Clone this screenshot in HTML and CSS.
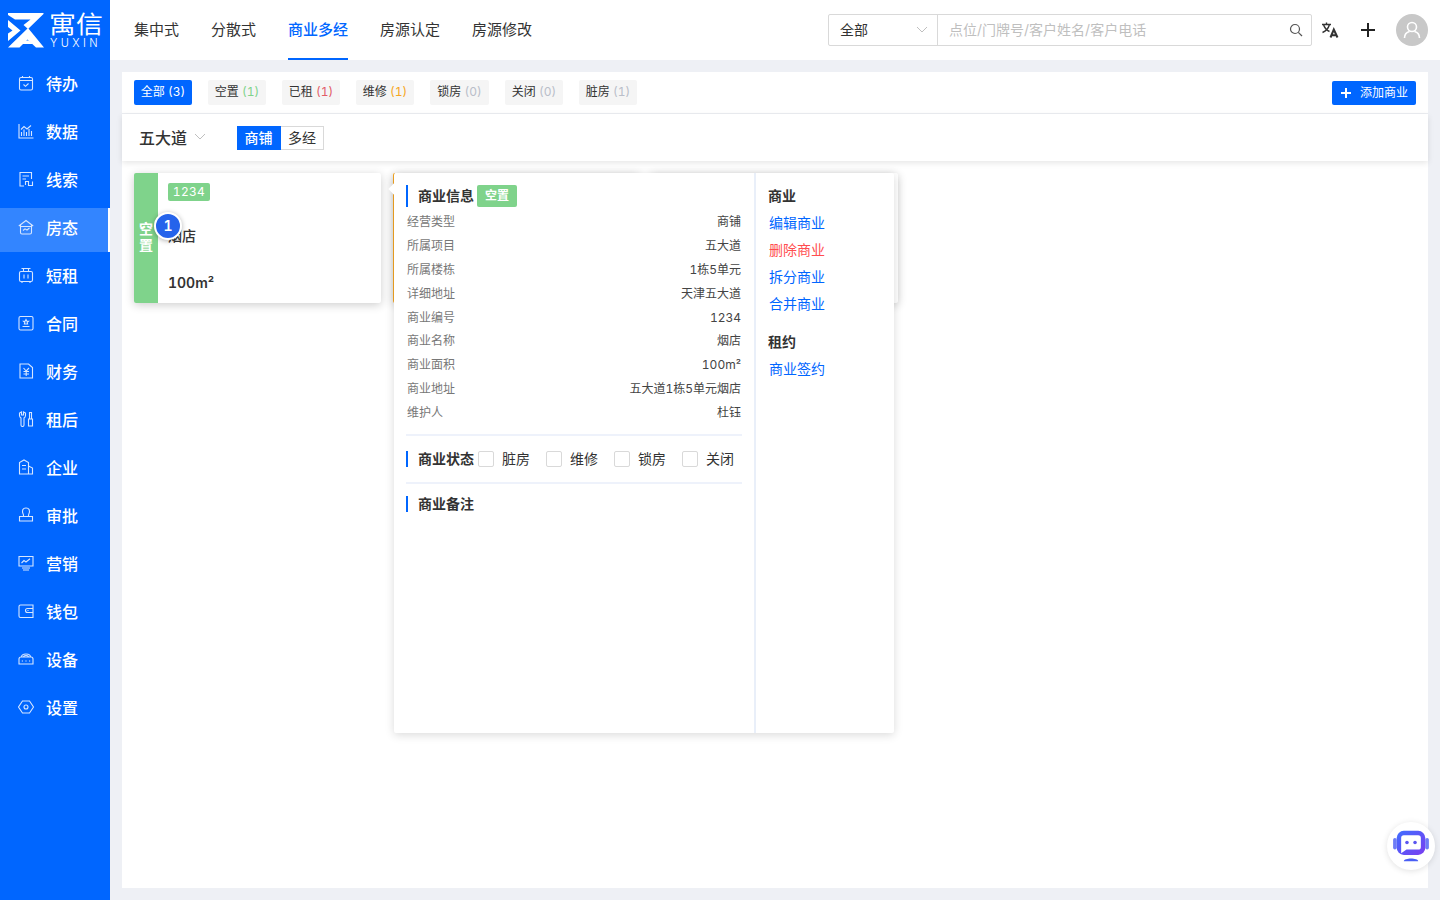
FILE: index.html
```html
<!DOCTYPE html>
<html lang="zh-CN">

<head>
  <meta charset="UTF-8" />
  <meta name="viewport" content="width=device-width, initial-scale=1.0" />
  <title>商业多经</title>
  <link rel="stylesheet" href="styles.css">
</head>

<body>
  <div class="app">

    <!-- Sidebar -->
    <aside class="sidebar">
      <div class="logo">
        <svg class="logo-mark" width="36" height="35" viewBox="0 0 36 35">
          <path fill="#fff" d="M0 0H35.500V1L20 16L15.500 12L22.500 6.500H7L0 2Z" />
          <path fill="#fff" d="M0 7L12.500 17.500L0 28V20.500L4.500 17.500L0 14Z" />
          <path fill="#fff" d="M0 34.500L20 15L36 34.500H28L19.500 26.500L11.500 34.500Z" />
          <path fill="#fff" d="M14 27.500H21L25 31H14Z" />
        </svg>
        <div class="logo-text">
          <div class="logo-cn">寓信</div>
          <div class="logo-en">YUXIN</div>
        </div>
      </div>

      <nav class="side-nav">
        <a class="side-item">
          <svg width="16" height="16" viewBox="0 0 16 16"><rect x="1.500" y="2.500" width="13" height="12.500" rx="1.500" /><path d="M1.500 5.500H14.500M4.500 1V3M11.500 1V3M5.500 9.500L7.500 11.300L10.500 8.500" /></svg>
          <span>待办</span>
        </a>
        <a class="side-item">
          <svg width="16" height="16" viewBox="0 0 16 16"><path d="M1 1V15H15.500M3.500 13V9M6 13V6.500M8.500 13V9M11 13V6M13.500 13V8M3 6.500L6 3.500L9 6L13 2.500" /></svg>
          <span>数据</span>
        </a>
        <a class="side-item">
          <svg width="16" height="16" viewBox="0 0 16 16"><path d="M6 15H2V1.500H13.500V8M4.500 5H11M4.500 8H8M7.500 14V10.500H10.500V14.500H14.500V10.500" /></svg>
          <span>线索</span>
        </a>
        <a class="side-item active">
          <svg width="16" height="16" viewBox="0 0 16 16"><path d="M0.800 7L8 1.500L15.200 7M2.500 6V13.500A1.500 1.500 0 0 0 4 15H12A1.500 1.500 0 0 0 13.500 13.500V6M2.500 7.500H13.500M5 11.500L7 9.800L9 11L11.500 9" /></svg>
          <span>房态</span>
        </a>
        <a class="side-item">
          <svg width="16" height="16" viewBox="0 0 16 16"><rect x="1.500" y="4.500" width="13" height="10" rx="1.500" /><path d="M3.500 1.500H12.500M5.500 1.500V4.500M10.500 1.500V4.500M6 7.500V11.500M10 7.500V11.500M4 15V16M12 15V16" /></svg>
          <span>短租</span>
        </a>
        <a class="side-item">
          <svg width="16" height="16" viewBox="0 0 16 16"><rect x="1" y="1.500" width="14" height="13.500" rx="1.500" /><path d="M8 4.500L8.800 6.200H10.500L9.200 7.400L9.600 9H6.400L6.800 7.400L5.500 6.200H7.200ZM4.500 11.500H11.500" /></svg>
          <span>合同</span>
        </a>
        <a class="side-item">
          <svg width="16" height="16" viewBox="0 0 16 16"><path d="M2 1H10.500L14.500 4.500V15H2ZM5.500 5L8.200 8L11 5M8.200 8V13M5.500 8.500H11M5.500 11H11" /></svg>
          <span>财务</span>
        </a>
        <a class="side-item">
          <svg width="16" height="16" viewBox="0 0 16 16"><path d="M1.500 2V4.500A3 3 0 0 0 3 7V14A1.500 1.500 0 0 0 6 14V7A3 3 0 0 0 7.500 4.500V2L5.500 1V4H3.500V1ZM10.500 8H14.500V15H10.500ZM11.500 8V1.500H13.500V8" /></svg>
          <span>租后</span>
        </a>
        <a class="side-item">
          <svg width="16" height="16" viewBox="0 0 16 16"><path d="M1.500 15V3.500L6 1L10.500 3.500V15ZM10.500 7L14.500 9V15H10.500M4 6.500H8M4 10H8" /></svg>
          <span>企业</span>
        </a>
        <a class="side-item">
          <svg width="16" height="16" viewBox="0 0 16 16"><path d="M5.500 9.500V8.500C5.500 7 4.500 6.500 4.500 4.500A3.500 3.500 0 0 1 11.500 4.500C11.500 6.500 10.500 7 10.500 8.500V9.500ZM1.500 9.500H14.500V14H1.500Z" /></svg>
          <span>审批</span>
        </a>
        <a class="side-item">
          <svg width="16" height="16" viewBox="0 0 16 16"><path d="M1 1.500H15V11H1ZM3.500 8L6 5.500L8 7L12 3.800M4 13H12M5 15H11" /></svg>
          <span>营销</span>
        </a>
        <a class="side-item">
          <svg width="16" height="16" viewBox="0 0 16 16"><path d="M15 4V2H2.500A1.500 1.500 0 0 0 1 3.500V13A1.500 1.500 0 0 0 2.500 14.500H15V4ZM15 5.500H9.500A2 2 0 0 0 9.500 9.500H15M9.500 7.500H10.500" /></svg>
          <span>钱包</span>
        </a>
        <a class="side-item">
          <svg width="16" height="16" viewBox="0 0 16 16"><path d="M1 8A2 2 0 0 1 3 6H13A2 2 0 0 1 15 8V13H1ZM3.500 6C3.500 2 12.500 2 12.500 6M5.500 6C5.500 4 10.500 4 10.500 6M3.800 10H5M7.400 10H8.600M11 10H12.200" /></svg>
          <span>设备</span>
        </a>
        <a class="side-item">
          <svg width="16" height="16" viewBox="0 0 16 16"><path d="M4.500 2H11.500L15.500 8L11.500 14H4.500L0.500 8Z" /><circle cx="8" cy="8" r="2" /></svg>
          <span>设置</span>
        </a>
      </nav>
    </aside>

    <div class="main">

      <!-- Header -->
      <header class="topbar">
        <nav class="tabs">
          <a class="tab">集中式</a>
          <a class="tab">分散式</a>
          <a class="tab active">商业多经</a>
          <a class="tab">房源认定</a>
          <a class="tab">房源修改</a>
        </nav>
        <div class="topbar-right">
          <div class="search">
            <div class="search-select">
              <span>全部</span>
              <svg width="12" height="7" viewBox="0 0 12 7"><path class="chevron" d="M1 1L6 6L11 1" /></svg>
            </div>
            <div class="search-input">
              <span>点位/门牌号/客户姓名/客户电话</span>
              <svg width="14" height="14" viewBox="0 0 14 14"><circle class="search-ico" cx="6" cy="6" r="4.500" /><path class="search-ico" d="M9.300 9.300L13 13" /></svg>
            </div>
          </div>
          <svg class="icon-translate" width="18" height="18" viewBox="0 0 18 18">
            <path d="M1 3.500H10M5.500 1.500V3.500M8.500 3.500C7.500 7 5 10 1.500 11.500M2.500 3.500C3.500 7 6 9.500 8.500 10.500" />
            <path class="thick" d="M9.500 16.500L12.800 8.500L16.500 16.500M10.500 14.300H15.500" />
          </svg>
          <svg class="icon-plus" width="14" height="14" viewBox="0 0 14 14"><path d="M7 0V14M0 7H14" /></svg>
          <div class="avatar">
            <svg width="20" height="20" viewBox="0 0 20 20"><circle cx="10" cy="7" r="4.500" /><path d="M2.500 18C2.500 14 5.500 12 7.500 11.500M17.500 18C17.500 14 14.500 12 12.500 11.500" /></svg>
          </div>
        </div>
      </header>

      <!-- Main Content -->
      <div class="content">
        <div class="panel">
          <div class="filters">
            <div class="chips">
              <span class="chip active">全部 <i>(3)</i></span>
              <span class="chip">空置 <i class="c-green">(1)</i></span>
              <span class="chip">已租 <i class="c-red">(1)</i></span>
              <span class="chip">维修 <i class="c-orange">(1)</i></span>
              <span class="chip wide">锁房 <i class="c-grey">(0)</i></span>
              <span class="chip">关闭 <i class="c-grey">(0)</i></span>
              <span class="chip">脏房 <i class="c-grey">(1)</i></span>
            </div>
            <button class="add-btn">
              <svg width="10" height="10" viewBox="0 0 10 10"><path d="M5 0V10M0 5H10" /></svg>
              添加商业
            </button>
          </div>

          <div class="subfilter">
            <div class="project">
              <span>五大道</span>
              <svg width="12" height="7" viewBox="0 0 12 7"><path class="chevron" d="M1 1L6 6L11 1" /></svg>
            </div>
            <div class="toggle">
              <span class="toggle-item active">商铺</span>
              <span class="toggle-item">多经</span>
            </div>
          </div>

          <div class="cards">
            <div class="card">
              <div class="card-side green">空置</div>
              <div class="card-body">
                <span class="card-no">1234</span>
                <div class="card-name">烟店</div>
                <div class="card-area">100m²</div>
              </div>
            </div>
            <div class="card">
              <div class="card-side orange"></div>
            </div>
            <div class="card">
              <div class="card-side"></div>
            </div>
          </div>

          <!-- Popover -->
          <div class="popover">
            <div class="pop-left">
              <div class="pop-title">
                <h4>商业信息</h4>
                <span class="pop-badge">空置</span>
              </div>
              <dl class="info">
                <div class="info-row"><dt>经营类型</dt><dd>商铺</dd></div>
                <div class="info-row"><dt>所属项目</dt><dd>五大道</dd></div>
                <div class="info-row"><dt>所属楼栋</dt><dd>1栋5单元</dd></div>
                <div class="info-row"><dt>详细地址</dt><dd>天津五大道</dd></div>
                <div class="info-row"><dt>商业编号</dt><dd>1234</dd></div>
                <div class="info-row"><dt>商业名称</dt><dd>烟店</dd></div>
                <div class="info-row"><dt>商业面积</dt><dd>100m²</dd></div>
                <div class="info-row"><dt>商业地址</dt><dd>五大道1栋5单元烟店</dd></div>
                <div class="info-row"><dt>维护人</dt><dd>杜钰</dd></div>
              </dl>
              <div class="pop-status">
                <h4>商业状态</h4>
                <label class="check"><i></i>脏房</label>
                <label class="check"><i></i>维修</label>
                <label class="check"><i></i>锁房</label>
                <label class="check"><i></i>关闭</label>
              </div>
              <div class="pop-note">
                <h4>商业备注</h4>
              </div>
            </div>
            <div class="pop-right">
              <h5>商业</h5>
              <a class="link">编辑商业</a>
              <a class="link danger">删除商业</a>
              <a class="link">拆分商业</a>
              <a class="link">合并商业</a>
              <h5 class="second">租约</h5>
              <a class="link">商业签约</a>
            </div>
          </div>

          <div class="step-dot">1</div>
        </div>
      </div>
    </div>
  </div>

  <!-- Chat robot -->
  <div class="robot">
    <svg width="42" height="38" viewBox="0 0 42 38">
      <defs>
        <linearGradient id="robotFill" x1="0" y1="0" x2="1" y2="1">
          <stop offset="0" stop-color="#3f6dff" />
          <stop offset="1" stop-color="#7a3df0" />
        </linearGradient>
      </defs>
      <rect x="1" y="10" width="4" height="13" rx="2" fill="#6d7cf6" />
      <rect x="37" y="10" width="4" height="13" rx="2" fill="#6d7cf6" />
      <rect x="5" y="2" width="32" height="27" rx="8" fill="url(#robotFill)" />
      <path d="M13 7H29A3 3 0 0 1 32 10V20A3 3 0 0 1 29 23H16L10 27V10A3 3 0 0 1 13 7Z" fill="#fff" />
      <circle cx="16.500" cy="15" r="2" fill="#5a55f0" />
      <circle cx="25.500" cy="15" r="2" fill="#5a55f0" />
      <path d="M13 36C13 32 29 32 29 36Z" fill="#4a5ff5" />
    </svg>
  </div>
</body>

</html>
```

FILE: styles.css
```css
* {
  box-sizing: border-box;
}

body {
  margin: 0;
  height: 900px;
  overflow: hidden;
  font-family: Inter, 'Noto Sans CJK SC', sans-serif;
  font-size: 14px;
  font-variant-numeric: tabular-nums;
  color: #333;
  background-color: #eef0f5;
}

h4, h5, dl, dd {
  margin: 0;
}

i {
  font-style: normal;
}

.app {
  display: flex;
  height: 900px;
}

/* Sidebar */
.sidebar {
  width: 110px;
  flex: 0 0 110px;
  background-color: #0066ff;
  color: #fff;
}

.logo {
  display: flex;
  height: 60px;
  padding: 13px 0 0 8px;
  gap: 5px;
}

.logo-cn {
  width: 56px;
  height: 24px;
  font-size: 24px;
  line-height: 24px;
  font-weight: 400;
  transform: scaleX(1.12);
  transform-origin: left;
}

.logo-en {
  font-size: 11px;
  line-height: 11px;
  letter-spacing: 3.4px;
  font-weight: 300;
  margin-top: 1px;
  padding-left: 1px;
}

.side-nav {
  display: flex;
  flex-direction: column;
  gap: 4px;
  padding-top: 4px;
}

.side-item {
  display: flex;
  align-items: center;
  height: 44px;
  padding: 0 0 6px 18px;
  gap: 12px;
  font-size: 16px;
  font-weight: 500;
}

.side-item svg {
  fill: none;
  stroke: #d6e6ff;
  stroke-width: 1.1;
}

.side-item.active {
  background-color: #3385ff;
  border-right: 2px solid #fff;
}

.main {
  flex: 1;
  display: flex;
  flex-direction: column;
  min-width: 0;
}

/* Top bar */
.topbar {
  display: flex;
  justify-content: space-between;
  height: 60px;
  padding: 0 12px 0 24px;
  background-color: #fff;
}

.tabs {
  display: flex;
  gap: 32px;
}

.tab {
  height: 60px;
  line-height: 60px;
  font-size: 15px;
  color: #333;
}

.tab.active {
  color: #0066ff;
  font-weight: 500;
  border-bottom: 2px solid #0066ff;
}

.topbar-right {
  display: flex;
  align-items: center;
}

.search {
  display: flex;
  width: 484px;
  height: 32px;
  border: 1px solid #d9d9d9;
  border-radius: 2px;
}

.search-select {
  display: flex;
  align-items: center;
  justify-content: space-between;
  width: 109px;
  padding: 0 9px 2px 11px;
  border-right: 1px solid #d9d9d9;
  color: #333;
}

.search-input {
  flex: 1;
  display: flex;
  align-items: center;
  justify-content: space-between;
  padding: 0 8px 2px 11px;
  color: #bfbfbf;
}

.search-input svg {
  margin-top: 2px;
}

.chevron {
  fill: none;
  stroke: #bfbfbf;
  stroke-width: 1;
}

.search-ico {
  fill: none;
  stroke: #555;
  stroke-width: 1.2;
}

.icon-translate {
  margin-left: 9px;
  fill: none;
  stroke: #333;
  stroke-width: 1.4;
}

.icon-translate .thick {
  stroke-width: 2;
}

.icon-plus {
  margin-left: 22px;
  fill: none;
  stroke: #222;
  stroke-width: 2;
}

.avatar {
  display: flex;
  align-items: center;
  justify-content: center;
  width: 32px;
  height: 32px;
  margin-left: 21px;
  border-radius: 50%;
  background-color: #c8c8c8;
}

.avatar svg {
  fill: none;
  stroke: #fff;
  stroke-width: 1.6;
}

/* Panel */
.content {
  flex: 1;
  padding: 12px;
  min-height: 0;
}

.panel {
  position: relative;
  height: 816px;
  background-color: #fff;
}

.filters {
  display: flex;
  justify-content: space-between;
  align-items: center;
  height: 42px;
  padding: 0 12px;
  border-bottom: 1px solid #eceef2;
}

.chips {
  display: flex;
  gap: 16px;
}

.chip {
  display: block;
  width: 58px;
  height: 25px;
  line-height: 24px;
  text-align: center;
  font-size: 12px;
  white-space: nowrap;
  color: #333;
  background-color: #f5f5f5;
  border-radius: 2px;
}

.chip.wide {
  width: 59px;
}

.chip.active {
  color: #fff;
  background-color: #0066ff;
}

.c-green { color: #7fd38b; }
.c-red { color: #e25c68; }
.c-orange { color: #f5a623; }
.c-grey { color: #b9bec9; }

.add-btn {
  display: flex;
  align-items: center;
  gap: 9px;
  width: 84px;
  height: 24px;
  padding: 0 0 2px 9px;
  border: none;
  border-radius: 2px;
  font-family: inherit;
  font-size: 12px;
  white-space: nowrap;
  color: #fff;
  background-color: #0066ff;
}

.add-btn svg {
  fill: none;
  stroke: #fff;
  stroke-width: 2;
  margin-top: 2px;
}

.subfilter {
  display: flex;
  align-items: center;
  height: 47px;
  padding-left: 17px;
  box-shadow: 0 2px 6px rgba(0, 0, 0, 0.1);
}

.project {
  display: flex;
  align-items: center;
  gap: 7px;
  width: 98px;
  padding-bottom: 2px;
  font-size: 16px;
  font-weight: 500;
}

.toggle {
  display: flex;
  height: 24px;
  border-radius: 2px;
}

.toggle-item {
  width: 43px;
  line-height: 22px;
  text-align: center;
  border: 1px solid #d9d9d9;
  border-left: none;
  color: #333;
}

.toggle-item.active {
  width: 44px;
  color: #fff;
  font-weight: 500;
  background-color: #0066ff;
  border-color: #0066ff;
}

.cards {
  display: flex;
  gap: 12px;
  padding: 12px;
}

.card {
  display: flex;
  width: 246.67px;
  height: 130px;
  background-color: #fff;
  border-radius: 2px;
  box-shadow: 0 2px 10px rgba(0, 0, 0, 0.2);
  overflow: hidden;
}

.card-side {
  display: flex;
  align-items: center;
  justify-content: center;
  flex: 0 0 24px;
  padding: 0 5px 2px;
  line-height: 16px;
  font-weight: 700;
  color: #fff;
}

.card + .card .card-side {
  flex-basis: 2px;
  padding: 0;
}

.card-side.green {
  background-color: #7fd38b;
}

.card-side.orange {
  background-color: #f5a623;
}

.card-body {
  flex: 1;
  padding: 10px 10px;
}

.card-no {
  display: block;
  width: 42px;
  height: 18px;
  line-height: 18px;
  text-align: center;
  font-size: 12px;
  letter-spacing: 0.3px;
  color: #fff;
  background-color: #7fd38b;
  border-radius: 2px;
}

.card-name {
  margin-top: 25px;
  line-height: 20px;
  font-weight: 500;
}

.card-area {
  margin-top: 27px;
  line-height: 20px;
  font-weight: 600;
}

/* Popover */
.popover {
  position: absolute;
  left: 272px;
  top: 101px;
  display: flex;
  width: 500px;
  height: 560px;
  background-color: #fff;
  border-radius: 2px;
  box-shadow: 0 2px 10px rgba(0, 0, 0, 0.15);
}

.popover::before {
  content: "";
  position: absolute;
  left: -4px;
  top: 12px;
  width: 8px;
  height: 8px;
  background-color: #fff;
  transform: rotate(45deg);
}

.pop-left {
  width: 362px;
  padding: 12px 12px 0;
  border-right: 2px solid #e9eff9;
}

.pop-left h4 {
  padding-left: 10px;
  border-left: 2px solid #0066ff;
  font-size: 14px;
  font-weight: 600;
  line-height: 16px;
  white-space: nowrap;
}

.pop-title {
  display: flex;
  align-items: center;
  gap: 3px;
  height: 22px;
}

.pop-title h4 {
  line-height: 22px;
}

.pop-badge {
  width: 40px;
  height: 22px;
  line-height: 22px;
  text-align: center;
  font-size: 12px;
  font-weight: 600;
  color: #fff;
  background-color: #7fd38b;
  border-radius: 2px;
}

.info {
  padding: 3px 1px 0;
}

.info-row {
  display: flex;
  justify-content: space-between;
  height: 23.9px;
  line-height: 24px;
  font-size: 12px;
}

.info-row dt {
  color: #777;
}

.info-row dd {
  color: #444;
}

.pop-status {
  display: flex;
  align-items: center;
  height: 50px;
  margin-top: 9px;
  border-top: 2px solid #eef2fb;
  border-bottom: 2px solid #eef2fb;
}

.check {
  display: flex;
  align-items: center;
  gap: 8px;
  margin-left: 5px;
  margin-right: 11px;
  color: #333;
  white-space: nowrap;
  line-height: 18px;
}

.check:first-of-type {
  margin-left: 4px;
}

.check i {
  display: block;
  width: 16px;
  height: 16px;
  border: 1px solid #d9d9d9;
  border-radius: 2px;
}

.pop-note {
  padding-top: 12px;
}

.pop-right {
  display: flex;
  flex-direction: column;
  align-items: flex-start;
  flex: 1;
  padding: 13px 12px 0;
}

.pop-right h5 {
  height: 19px;
  line-height: 19px;
  font-size: 14px;
  font-weight: 600;
  color: #333;
}

.pop-right .second {
  margin-top: 15px;
}

.link {
  height: 27px;
  line-height: 27px;
  padding-left: 1px;
  color: #0066ff;
}

.pop-right h5 + .link {
  margin-top: 4px;
}

.link.danger {
  color: #ff4d4f;
}

.step-dot {
  position: absolute;
  left: 32px;
  top: 140px;
  width: 28px;
  height: 28px;
  line-height: 24px;
  text-align: center;
  font-size: 14px;
  font-weight: 600;
  color: #fff;
  background-color: #2563eb;
  border: 2px solid #fff;
  border-radius: 50%;
  box-shadow: 0 1px 5px rgba(0, 0, 0, 0.3);
}

.robot {
  position: fixed;
  left: 1387px;
  top: 822px;
  display: flex;
  align-items: center;
  justify-content: center;
  width: 48px;
  height: 48px;
  background-color: #fff;
  border-radius: 50%;
  box-shadow: 0 1px 6px rgba(0, 0, 0, 0.12);
}

.robot svg {
  width: 38px;
  height: 34px;
}
```
